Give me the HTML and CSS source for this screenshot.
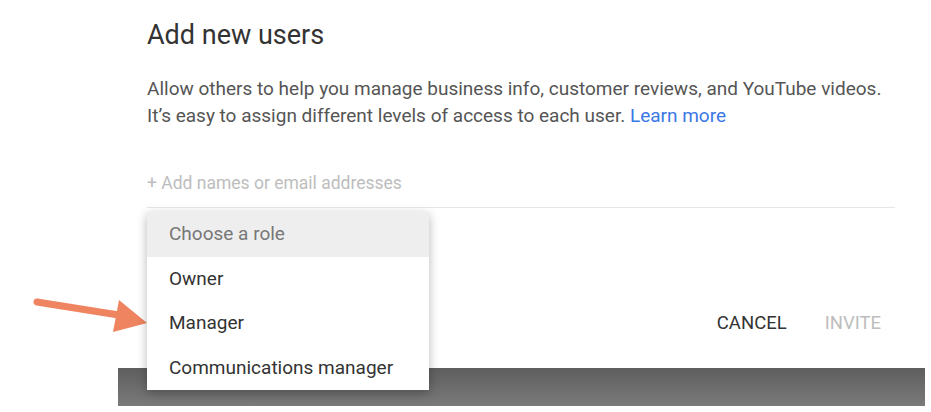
FILE: index.html
```html
<!DOCTYPE html>
<html lang="en">
<head>
  <meta charset="UTF-8" />
  <title>Add new users</title>
  <link rel="stylesheet" href="styles.css">
</head>
<body>
  <div class="page">
    <div class="dialog">
      <h1>Add new users</h1>
      <p class="intro">
        Allow others to help you manage business info, customer reviews, and YouTube videos.<br>
        It’s easy to assign different levels of access to each user. <a href="#">Learn more</a>
      </p>

      <div class="field">+ Add names or email addresses</div>

      <div class="role-row">
        <div class="actions">
          <button class="btn">CANCEL</button>
          <button class="btn disabled">INVITE</button>
        </div>

        <ul class="menu">
          <li class="placeholder">Choose a role</li>
          <li>Owner</li>
          <li>Manager</li>
          <li>Communications manager</li>
        </ul>
      </div>
    </div>

    <div class="band"></div>

    <svg class="arrow" width="130" height="50" viewBox="0 0 130 50">
      <path d="M4 8 L92 22" stroke="#ef8460" stroke-width="7" stroke-linecap="round" fill="none"/>
      <path d="M86 6 L114 29 L80 38 Z" fill="#ef8460"/>
    </svg>
  </div>
</body>
</html>
```

FILE: styles.css
```css
body {
  margin: 0;
  background-color: #ffffff;
  font-family: Roboto, "Liberation Sans", Arial, sans-serif;
  color: #444;
}

.page {
  position: relative;
  width: 931px;
  height: 412px;
  overflow: hidden;
}

.dialog {
  padding: 18px 36px 0 147px;
}

h1 {
  margin: 0;
  font-size: 27px;
  font-weight: 400;
  line-height: 34px;
  color: #333;
}

.intro {
  margin: 23px 0 0 0;
  font-size: 19px;
  line-height: 27px;
  color: #555;
}

.intro a {
  color: #3b78e7;
  text-decoration: none;
}

.field {
  margin-top: 43px;
  padding-bottom: 13px;
  font-size: 17.5px;
  line-height: 22px;
  color: #bdbdbd;
  border-bottom: 1px solid #e6e6e6;
}

.role-row {
  position: relative;
  height: 160px;
}

.actions {
  display: flex;
  justify-content: flex-end;
  padding-top: 98px;
  padding-right: 1px;
}

.btn {
  background: none;
  border: none;
  font-family: inherit;
  font-size: 18.5px;
  font-weight: 400;
  line-height: 22px;
  color: #333;
  padding: 6px 19px;
  cursor: pointer;
}

.btn.disabled {
  color: #bdbdbd;
  padding-right: 13px;
}

.menu {
  position: absolute;
  top: 4px;
  left: 0;
  width: 282px;
  margin: 0;
  padding: 0;
  list-style: none;
  background-color: #ffffff;
  box-shadow: 0 3px 10px rgba(0,0,0,0.28);
  z-index: 2;
}

.menu li {
  height: 44.5px;
  line-height: 44.5px;
  padding: 0 22px;
  font-size: 19px;
  color: #333;
}

.menu li.placeholder {
  background-color: #eeeeee;
  color: #777;
}

.band {
  margin: 0 6px 0 118px;
  height: 38px;
  background: linear-gradient(#5e5e5e, #7a7a7a);
}

.arrow {
  position: absolute;
  left: 33px;
  top: 294px;
}
```
